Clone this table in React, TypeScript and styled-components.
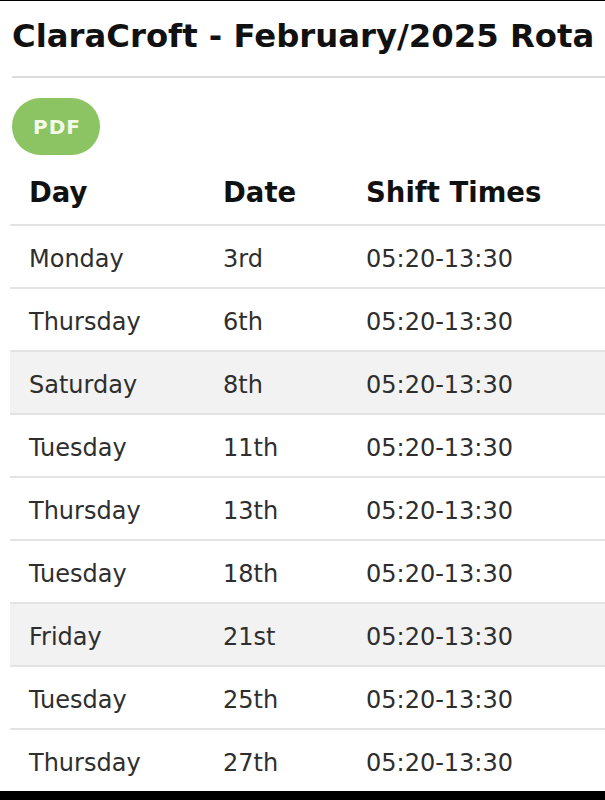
import React from "react";
import styled, { createGlobalStyle } from "styled-components";

const GlobalStyle = createGlobalStyle`
  html, body {
    margin: 0;
    padding: 0;
    background: #000;
    overflow: hidden;
  }
  body {
    font-family: "DejaVu Sans", Verdana, sans-serif;
  }
`;

const Page = styled.div`
  box-sizing: border-box;
  height: 791px;
  border-top: 1px solid #000;
  background: #fff;
  padding-left: 12px;
  overflow: hidden;
`;

const Title = styled.h1`
  margin: 16px 0 0;
  font-size: 32.3px;
  line-height: 38px;
  font-weight: bold;
  color: #111;
  white-space: nowrap;
`;

const Rule = styled.div`
  margin-top: 21px;
  height: 2px;
  background: #dcdcdc;
`;

const ButtonBar = styled.div`
  display: flex;
  margin-top: 20px;
`;

const PdfButton = styled.button`
  width: 88px;
  height: 57px;
  border: none;
  border-radius: 29px;
  background: #8cc463;
  color: #f3fae6;
  font-family: "DejaVu Sans", Verdana, sans-serif;
  font-weight: bold;
  font-size: 20px;
  letter-spacing: 1px;
  padding: 0 0 0 2px;
  cursor: pointer;
`;

const Table = styled.div`
  margin-top: 8px;
  margin-left: -2px;
  width: 620px;
`;

const Row = styled.div<{ $shaded?: boolean }>`
  display: grid;
  grid-template-columns: 194px 143px 1fr;
  align-items: center;
  height: 61px;
  border-bottom: 2px solid #e3e3e3;
  background: ${(p) => (p.$shaded ? "#f2f2f2" : "#fff")};
`;

const HeadCell = styled.div`
  padding: 0 0 4px 19px;
  font-size: 27.5px;
  font-weight: bold;
  color: #111;
  white-space: nowrap;
`;

const Cell = styled.div`
  padding: 4px 0 0 19px;
  font-size: 24px;
  color: #2e2e2e;
  white-space: nowrap;
`;

const shifts = [
  { day: "Monday", date: "3rd" },
  { day: "Thursday", date: "6th" },
  { day: "Saturday", date: "8th", shaded: true },
  { day: "Tuesday", date: "11th" },
  { day: "Thursday", date: "13th" },
  { day: "Tuesday", date: "18th" },
  { day: "Friday", date: "21st", shaded: true },
  { day: "Tuesday", date: "25th" },
  { day: "Thursday", date: "27th" },
];

export default function App() {
  return (
    <>
      <GlobalStyle />
      <Page>
        <Title>ClaraCroft - February/2025 Rota</Title>
        <Rule />
        <ButtonBar>
          <PdfButton>PDF</PdfButton>
        </ButtonBar>
        <Table>
          <Row>
            <HeadCell>Day</HeadCell>
            <HeadCell>Date</HeadCell>
            <HeadCell>Shift Times</HeadCell>
          </Row>
          {shifts.map((s, i) => (
            <Row key={i} $shaded={s.shaded}>
              <Cell>{s.day}</Cell>
              <Cell>{s.date}</Cell>
              <Cell>05:20-13:30</Cell>
            </Row>
          ))}
        </Table>
      </Page>
    </>
  );
}
